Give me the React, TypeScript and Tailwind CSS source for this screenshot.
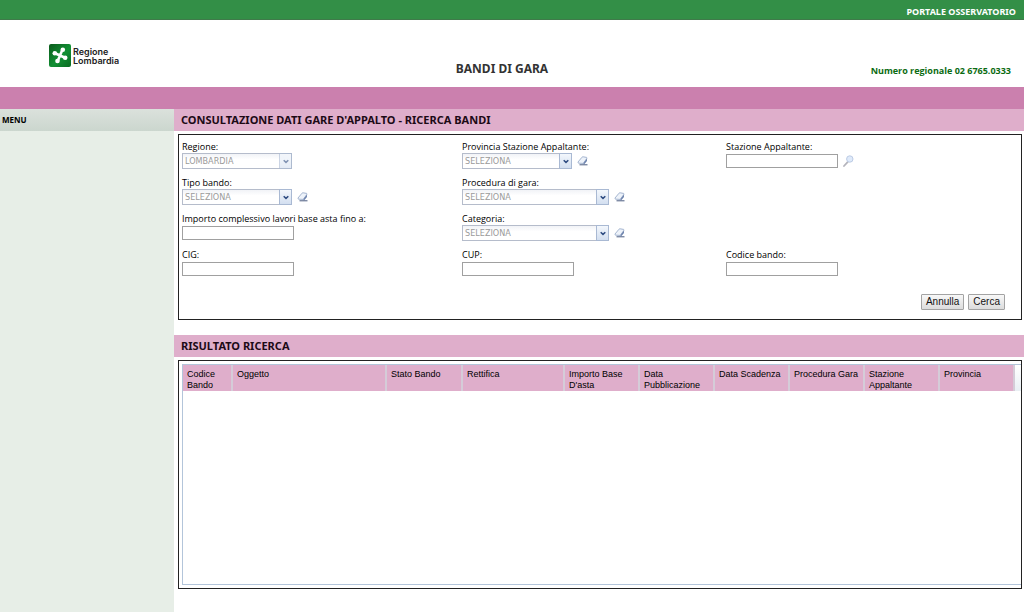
import type { ReactNode } from "react";

const COLUMNS = [
  { label: "Codice Bando", width: "w-[50px]" },
  { label: "Oggetto", width: "w-[154px]" },
  { label: "Stato Bando", width: "w-[76px]" },
  { label: "Rettifica", width: "w-[102px]" },
  { label: "Importo Base D'asta", width: "w-[75px]" },
  { label: "Data Pubblicazione", width: "w-[75px]" },
  { label: "Data Scadenza", width: "w-[75px]" },
  { label: "Procedura Gara", width: "w-[75px]" },
  { label: "Stazione Appaltante", width: "w-[75px]" },
  { label: "Provincia", width: "w-[75px]" },
];

function Logo() {
  return (
    <a href="#" className="flex items-center gap-[2px]">
      <svg width="22" height="23" viewBox="0 0 22 23" aria-hidden="true">
        <defs>
          <linearGradient id="logo-green" x1="0" y1="0" x2="1" y2="1">
            <stop offset="0" stopColor="#0b5a1c" />
            <stop offset="0.55" stopColor="#129034" />
            <stop offset="1" stopColor="#0a6a22" />
          </linearGradient>
        </defs>
        <rect width="22" height="23" rx="2" fill="url(#logo-green)" />
        <g stroke="#fff" strokeWidth="2.6" strokeLinecap="round">
          <path d="M11 11.5L13.5 5.5M11 11.5L16.5 14M11 11.5L8.5 17.5M11 11.5L5.5 9" />
        </g>
        <g fill="#fff">
          <circle cx="13.8" cy="5.8" r="2.3" />
          <circle cx="16.2" cy="13.8" r="2.3" />
          <circle cx="8.5" cy="17" r="2.3" />
          <circle cx="5.8" cy="9.2" r="2.3" />
        </g>
      </svg>
      <span className="flex flex-col font-['Inter',sans-serif] text-[9px] leading-[9px] font-semibold text-[#222]">
        <span>Regione</span>
        <span>Lombardia</span>
      </span>
    </a>
  );
}

function EraserIcon() {
  return (
    <svg width="11" height="10" viewBox="0 0 11 10" aria-hidden="true">
      <path d="M1 6L5 1.2Q5.5 .7 6.2 .8L9.5 1.4Q10.4 1.7 9.8 2.5L6.2 7.4L1.8 7.2Q.6 7 1 6Z" fill="#eef3fa" stroke="#8fa3c4" strokeWidth=".8" />
      <path d="M6.2 7.4L9.9 2.5L10 5L7 8.6Z" fill="#6d83ad" />
      <path d="M2.5 8.8H10.5" stroke="#4a5c80" strokeWidth="1" />
    </svg>
  );
}

function SearchIcon() {
  return (
    <svg width="11" height="12" viewBox="0 0 11 12" aria-hidden="true">
      <path d="M1 11L4.8 6.8" stroke="#b4b4bc" strokeWidth="1.8" strokeLinecap="round" />
      <circle cx="6.8" cy="4" r="3.2" fill="#dfeafa" stroke="#bccbe4" />
    </svg>
  );
}

function Field({ id, label, children }: { id: string; label: string; children: ReactNode }) {
  return (
    <div>
      <label htmlFor={id} className="block text-[9px] leading-3 whitespace-nowrap">
        {label}
      </label>
      <div className="flex h-4 items-center gap-[5px]">{children}</div>
    </div>
  );
}

function TextField({ id, label, search }: { id: string; label: string; search?: boolean }) {
  return (
    <Field id={id} label={label}>
      <input id={id} type="text" className="h-[14px] w-28 border border-[#a0a0a0] bg-white px-0.5 text-[9px]" />
      {search && (
        <button type="button" aria-label="Cerca stazione">
          <SearchIcon />
        </button>
      )}
    </Field>
  );
}

function SelectField({
  id,
  label,
  value = "SELEZIONA",
  wide,
  disabled,
}: {
  id: string;
  label: string;
  value?: string;
  wide?: boolean;
  disabled?: boolean;
}) {
  return (
    <Field id={id} label={label}>
      <div className={`relative h-4 ${wide ? "w-[147px]" : "w-[110px]"}`}>
        <select
          id={id}
          disabled={disabled}
          className="block h-4 w-full appearance-none border border-[#b5bccb] bg-gradient-to-b from-[#f1f3f7] to-white to-40% pt-px pl-0.5 font-['DejaVu_Sans_Condensed','DejaVu_Sans',sans-serif] text-[9px] leading-[13px] text-[#9a9a9a] disabled:opacity-100"
        >
          <option>{value}</option>
        </select>
        <span
          className={`pointer-events-none absolute inset-y-0 right-0 flex w-[13px] items-center justify-center border border-[#a9b9d3] bg-gradient-to-b from-[#f3f7fc] to-[#d3dff0] ${disabled ? "opacity-60" : ""}`}
        >
          <svg width="6" height="5" viewBox="0 0 6 5" aria-hidden="true">
            <path d="M.7 1.2L3 3.4L5.3 1.2" fill="none" stroke="#2c4a80" strokeWidth="1.5" />
          </svg>
        </span>
      </div>
      {!disabled && (
        <button type="button" aria-label={`Cancella ${label}`}>
          <EraserIcon />
        </button>
      )}
    </Field>
  );
}

function SectionTitle({ children }: { children: ReactNode }) {
  return (
    <h2 className="bg-[#dfaecb] pl-[7px] font-['Noto_Sans',sans-serif] text-[11px] leading-[22px] font-bold text-[#1c0a16]">
      {children}
    </h2>
  );
}

function ActionButton({ children, type }: { children: ReactNode; type: "submit" | "reset" }) {
  return (
    <button
      type={type}
      className="h-4 rounded-[1px] border border-[#a3a3a3] bg-gradient-to-b from-[#f8f8f8] to-[#dcdcdc] px-1 font-['Liberation_Sans',sans-serif] text-[10px] leading-[14px] text-[#111]"
    >
      {children}
    </button>
  );
}

export default function App() {
  return (
    <div className="flex min-h-screen flex-col bg-white font-['Open_Sans','Noto_Sans',sans-serif] text-black">
      {/* Top bar */}
      <div className="flex h-5 items-center justify-end border-b border-[#3f7a4a] bg-[#338f47] pt-1 pr-2">
        <a href="#" className="font-['Noto_Sans',sans-serif] text-[9px] leading-3 font-bold text-white">
          PORTALE OSSERVATORIO
        </a>
      </div>

      {/* Header */}
      <header className="grid h-[67px] grid-cols-[1fr_auto_1fr] items-end pr-[13px] pb-2.5 pl-[49px]">
        <div className="pb-2.5">
          <Logo />
        </div>
        <h1 className="pr-14 font-['Noto_Sans',sans-serif] text-[12px] leading-4 font-bold text-[#333]">BANDI DI GARA</h1>
        <p className="text-right text-[9px] leading-3 font-bold whitespace-nowrap text-[#0b6b12]">
          Numero regionale 02 6765.0333
        </p>
      </header>
      <div className="h-[22px] bg-[#cb80ae]" />

      <div className="flex flex-1">
        {/* Sidebar */}
        <nav className="w-[174px] shrink-0 bg-[#e7eee7]">
          <h2 className="bg-gradient-to-b from-[#dbe1dc] to-[#cbd6ce] pl-0.5 text-[8px] leading-[22px] font-bold">MENU</h2>
        </nav>

        <main className="min-w-0 flex-1">
          <SectionTitle>CONSULTAZIONE DATI GARE D'APPALTO - RICERCA BANDI</SectionTitle>
          <form className="mt-[3px] mr-0.5 ml-1 border border-[#222] pt-1.5 pb-[9px] pl-[3px]">
            <div className="grid grid-cols-[280fr_264fr_295fr] gap-y-2">
              <SelectField id="regione" label="Regione:" value="LOMBARDIA" disabled />
              <SelectField id="provincia" label="Provincia Stazione Appaltante:" />
              <TextField id="stazione" label="Stazione Appaltante:" search />
              <SelectField id="tipo" label="Tipo bando:" />
              <div className="col-span-2">
                <SelectField id="procedura" label="Procedura di gara:" wide />
              </div>
              <TextField id="importo" label="Importo complessivo lavori base asta fino a:" />
              <div className="col-span-2">
                <SelectField id="categoria" label="Categoria:" wide />
              </div>
              <TextField id="cig" label="CIG:" />
              <TextField id="cup" label="CUP:" />
              <TextField id="codice" label="Codice bando:" />
            </div>
            <div className="mt-[17px] flex justify-end gap-1 pr-4">
              <ActionButton type="reset">Annulla</ActionButton>
              <ActionButton type="submit">Cerca</ActionButton>
            </div>
          </form>

          <div className="mt-[15px]">
            <SectionTitle>RISULTATO RICERCA</SectionTitle>
          </div>
          <div className="mt-[3px] mr-0.5 ml-1 border border-[#222] pt-[3px] pb-[3px] pl-[3px]">
            <div className="min-h-[221px] border border-r-0 border-[#b3c5da]">
              <table className="w-full table-fixed border-separate border-spacing-0 font-['Liberation_Sans',sans-serif] text-[9px] leading-[11px]">
                <thead>
                  <tr className="h-[25px]">
                    {COLUMNS.map((col) => (
                      <th
                        key={col.label}
                        scope="col"
                        className={`${col.width} border-r-2 border-[#d5ccd8] bg-[#dfaecb] pt-1 pl-1 text-left align-top font-normal`}
                      >
                        {col.label}
                      </th>
                    ))}
                    <td className="bg-gradient-to-b from-white to-[#e9eff4]" />
                  </tr>
                </thead>
              </table>
            </div>
          </div>
        </main>
      </div>
    </div>
  );
}
